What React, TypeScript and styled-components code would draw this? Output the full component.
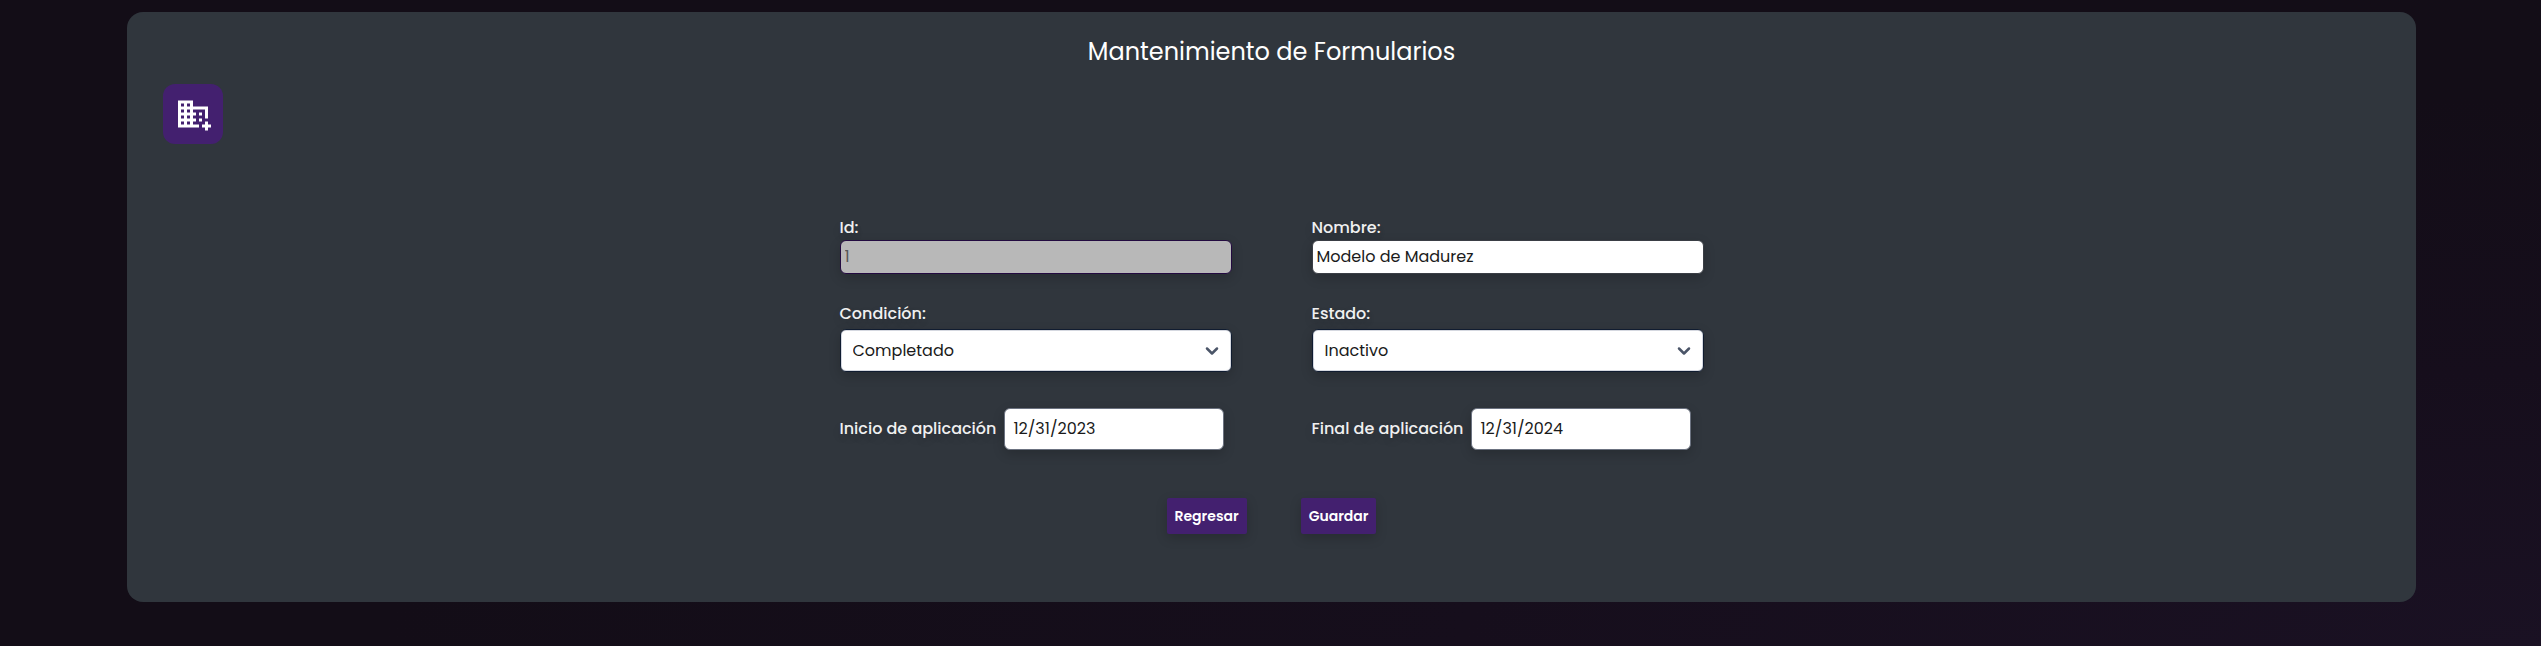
import React from "react";
import styled, { createGlobalStyle } from "styled-components";
import { MdDomainAdd } from "react-icons/md";
import { ChevronDown } from "lucide-react";

const GlobalStyle = createGlobalStyle`
  *, *::before, *::after { box-sizing: border-box; }
  html { min-height: 100%; background: #130c18; }
  body {
    margin: 0;
    min-height: 100vh;
    font-family: Poppins, Inter, "Open Sans", sans-serif;
    font-size: 16px;
    line-height: 24px;
    color: #fff;
    background: radial-gradient(ellipse at 100% 100%, #1a1123 0%, #160e1c 30%, #130d17 60%);
  }
  button, input, select { font: inherit; }
`;

const Page = styled.main`
  padding: 12px calc(5% - 2px) 44px 5%;
`;

const Card = styled.section`
  display: flex;
  flex-direction: column;
  padding: 22px 36px 68px;
  border-radius: 16px;
  background: #30363d;
`;

const Title = styled.h1`
  margin: 0 0 14px;
  font-size: 24px;
  line-height: 36px;
  font-weight: 400;
  text-align: center;
`;

const AddButton = styled.button`
  display: flex;
  align-items: center;
  justify-content: center;
  width: 60px;
  height: 60px;
  padding: 0;
  border: 0;
  border-radius: 12px;
  background: #43206f;
  color: #fff;
  cursor: pointer;
`;

const Form = styled.form`
  width: 100%;
  max-width: 864px;
  margin: 72px auto 0;
`;

const Fields = styled.div`
  display: grid;
  grid-template-columns: 1fr 1fr;
  column-gap: 80px;
`;

const Field = styled.div<{ $gap?: number }>`
  display: flex;
  flex-direction: column;
  gap: ${(p) => p.$gap ?? 0}px;
  margin-bottom: ${(p) => (p.$gap ? 36 : 28)}px;
`;

const DateField = styled.div`
  display: flex;
  align-items: center;
  gap: 8px;
`;

const Label = styled.label`
  color: #f0f0f0;
  font-weight: 500;
  white-space: nowrap;
  text-shadow: 0 4px 8px rgba(0, 0, 0, 0.16);
`;

const shadow = "0 4px 12px rgba(0, 0, 0, 0.18)";

const TextInput = styled.input`
  width: 100%;
  height: 34px;
  padding: 0 4px 2px;
  border: 1px solid #3a3e45;
  border-radius: 6px;
  background: #fff;
  color: #1a1a1a;
  box-shadow: ${shadow};

  &:disabled {
    border-color: #230a40;
    background: #b8b8b8;
    color: #555;
  }
`;

const SelectBox = styled.div`
  display: grid;
  align-items: center;

  > * { grid-area: 1 / 1; }
  > svg {
    justify-self: end;
    margin-right: 10px;
    pointer-events: none;
  }
`;

const Select = styled.select`
  appearance: none;
  width: 100%;
  height: 43px;
  padding: 0 36px 0 12px;
  border: 1px solid #101c30;
  border-radius: 6px;
  background: #fff;
  color: #1a1a1a;
  box-shadow: inset 0 0 0 1px #d5d8e0, ${shadow};
`;

const DateInput = styled.input`
  width: 220px;
  height: 42px;
  padding: 0 8px 2px;
  border: 1px solid #6b7280;
  border-radius: 6px;
  background: #fff;
  color: #1a1a1a;
  box-shadow: ${shadow};
`;

const Actions = styled.div`
  display: flex;
  justify-content: center;
  gap: 54px;
  margin-top: 48px;
`;

const ActionButton = styled.button`
  height: 36px;
  padding: 0 8px;
  border: 0;
  border-radius: 2px;
  background: #43206f;
  color: #fff;
  font-size: 14px;
  font-weight: 600;
  box-shadow: ${shadow};
  cursor: pointer;
`;

type SelectFieldProps = { id: string; label: string; options: string[]; value: string };

function SelectField({ id, label, options, value }: SelectFieldProps) {
  return (
    <Field $gap={3}>
      <Label htmlFor={id}>{label}</Label>
      <SelectBox>
        <Select id={id} defaultValue={value}>
          {options.map((o) => (
            <option key={o}>{o}</option>
          ))}
        </Select>
        <ChevronDown size={20} color="#4b5568" strokeWidth={3} aria-hidden />
      </SelectBox>
    </Field>
  );
}

export default function App() {
  return (
    <>
      <GlobalStyle />
      <Page>
        <Card>
          <Title>Mantenimiento de Formularios</Title>
          <AddButton type="button">
            <MdDomainAdd size={36} />
          </AddButton>
          <Form onSubmit={(e) => e.preventDefault()}>
            <Fields>
              <Field>
                <Label htmlFor="id">Id:</Label>
                <TextInput id="id" defaultValue="1" disabled />
              </Field>
              <Field>
                <Label htmlFor="nombre">Nombre:</Label>
                <TextInput id="nombre" defaultValue="Modelo de Madurez" />
              </Field>
              <SelectField id="condicion" label="Condición:" value="Completado" options={["Completado"]} />
              <SelectField id="estado" label="Estado:" value="Inactivo" options={["Inactivo"]} />
              <DateField>
                <Label htmlFor="inicio">Inicio de aplicación</Label>
                <DateInput id="inicio" defaultValue="12/31/2023" />
              </DateField>
              <DateField>
                <Label htmlFor="final">Final de aplicación</Label>
                <DateInput id="final" defaultValue="12/31/2024" />
              </DateField>
            </Fields>
            <Actions>
              <ActionButton type="button">Regresar</ActionButton>
              <ActionButton type="submit">Guardar</ActionButton>
            </Actions>
          </Form>
        </Card>
      </Page>
    </>
  );
}
